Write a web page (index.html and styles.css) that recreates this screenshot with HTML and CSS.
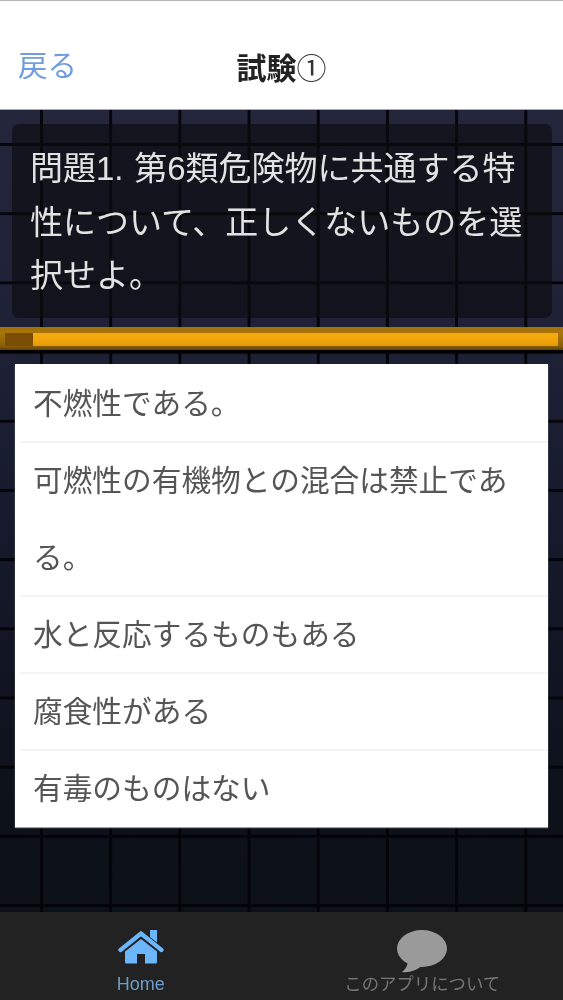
FILE: index.html
```html
<!DOCTYPE html>
<html lang="ja">
<head>
<meta charset="utf-8">
<title>試験①</title>
<link rel="stylesheet" href="styles.css">
</head>
<body>
<div class="app">
  <header class="navbar">
    <a class="back">戻る</a>
    <h1 class="title">試験<span class="title-num">①</span></h1>
  </header>
  <main class="board">
    <section class="question">問題1. 第6類危険物に共通する特性について、正しくないものを選択せよ。</section>
    <div class="progress"><div class="progress-track"><div class="progress-fill"></div></div></div>
    <ul class="answers">
      <li class="answer">不燃性である。</li>
      <li class="answer">可燃性の有機物との混合は禁止である。</li>
      <li class="answer">水と反応するものもある</li>
      <li class="answer">腐食性がある</li>
      <li class="answer">有毒のものはない</li>
    </ul>
  </main>
  <nav class="tabbar">
    <div class="tab tab-active">
      <svg class="tab-icon" width="46" height="34" viewBox="0 0 46 34">
        <rect x="32" y="0" width="7" height="14" fill="currentColor"/>
        <polyline points="2,20.5 23,4 44,20.5" fill="none" stroke="#222" stroke-width="6.500"/>
        <polyline points="2.500,20 23,3.500 43.500,20" fill="none" stroke="currentColor" stroke-width="4.200" stroke-linecap="round"/>
        <path d="M23 9 L7 21.500 V32 a1.500 1.500 0 0 0 1.500 1.500 H19 V24 H27 V33.500 H37.500 a1.500 1.500 0 0 0 1.500 -1.500 V21.500 Z" fill="currentColor"/>
      </svg>
      <span class="tab-label tab-label-en">Home</span>
    </div>
    <div class="tab">
      <svg class="tab-icon" width="50" height="43" viewBox="0 0 50 43">
        <ellipse cx="25" cy="18.500" rx="25" ry="18.500" fill="currentColor"/>
        <path d="M11 30 C11 35 9 39 5 42 C13 43 20 40 26 35 Z" fill="currentColor"/>
      </svg>
      <span class="tab-label">このアプリについて</span>
    </div>
  </nav>
</div>
</body>
</html>
```
FILE: styles.css
```css
* { box-sizing: border-box; }
html, body { margin: 0; padding: 0; }
body {
  font-family: "Liberation Sans", "Noto Sans CJK JP", sans-serif;
  background: #000;
}
.app {
  width: 563px;
  height: 1000px;
  display: flex;
  flex-direction: column;
  overflow: hidden;
  filter: blur(0.45px);
}
.navbar {
  height: 110px;
  flex: none;
  background: #fff;
  border-top: 1px solid #b5b5b5;
  border-bottom: 1px solid #a9a9b0;
  position: relative;
  display: flex;
  justify-content: center;
  padding-top: 48px;
}
.back {
  position: absolute;
  left: 18px;
  top: 47px;
  font-size: 29.500px;
  line-height: 36px;
  color: #6f9ddf;
}
.title {
  margin: 0;
  font-size: 30px;
  line-height: 40px;
  font-weight: 700;
  color: #222;
}
.title-num {
  font-weight: 400;
  color: #333;
}
.board {
  flex: 1;
  background-color: #151828;
  background-image:
    linear-gradient(90deg, rgba(3,3,8,.95) 3px, transparent 3px),
    linear-gradient(180deg, rgba(3,3,8,.95) 3px, transparent 3px),
    linear-gradient(180deg, #24263c 0%, #1e2136 30%, #141829 58%, #0d1119 88%, #0c1118 100%);
  background-size: 69.200px 69.200px, 69.200px 69.200px, 100% 100%;
  background-position: 40px 0, 0 33px, 0 0;
  overflow: hidden;
}
.question {
  height: 194px;
  margin: 14px 11px 9px 12px;
  padding: 18px 10px 0 18px;
  background: rgba(12,12,15,.66);
  border-radius: 7px;
  color: #e2e2e2;
  font-size: 33px;
  line-height: 53.500px;
  word-spacing: 1.500px;
}
.progress {
  height: 23px;
  padding: 6px 5px 4px 5px;
  background: linear-gradient(180deg, #a06f08 0, #a9760a 6px, #8a5f08 19px, #5f4208 23px);
  box-shadow: 0 3px 2px #000;
}
.progress-track {
  height: 13px;
  background: linear-gradient(180deg, #f6ab10 0, #f1a40c 60%, #e0970a 100%);
}
.progress-fill {
  width: 28px;
  height: 13px;
  background: #7a4d05;
}
.answers {
  list-style: none;
  margin: 14px 15px 0;
  padding: 1px 0 0;
  background: #fff;
  box-shadow: 0 1px 1px rgba(200,200,205,.8);
}
.answer {
  position: relative;
  padding: 0 20px 0 18px;
  font-size: 29.700px;
  line-height: 77px;
  color: #555;
}
.answer + .answer::before {
  content: "";
  position: absolute;
  left: 5px;
  right: 0;
  top: -1px;
  height: 2px;
  background: #f4f4f5;
}
.tabbar {
  height: 88px;
  flex: none;
  background: #222;
  display: grid;
  grid-template-columns: 1fr 1fr;
}
.tab {
  position: relative;
  display: flex;
  flex-direction: column;
  align-items: center;
  padding-top: 18px;
  color: #9a9a9a;
}
.tab-active { color: #6cb7fb; }
.tab-icon { display: block; flex: none; }
.tab-label {
  position: absolute;
  top: 60px;
  left: 0;
  right: 0;
  text-align: center;
  font-size: 17.400px;
  line-height: 24px;
  color: #757575;
  white-space: nowrap;
}
.tab-label-en {
  font-size: 18px;
  color: #6d9cca;
}
```
